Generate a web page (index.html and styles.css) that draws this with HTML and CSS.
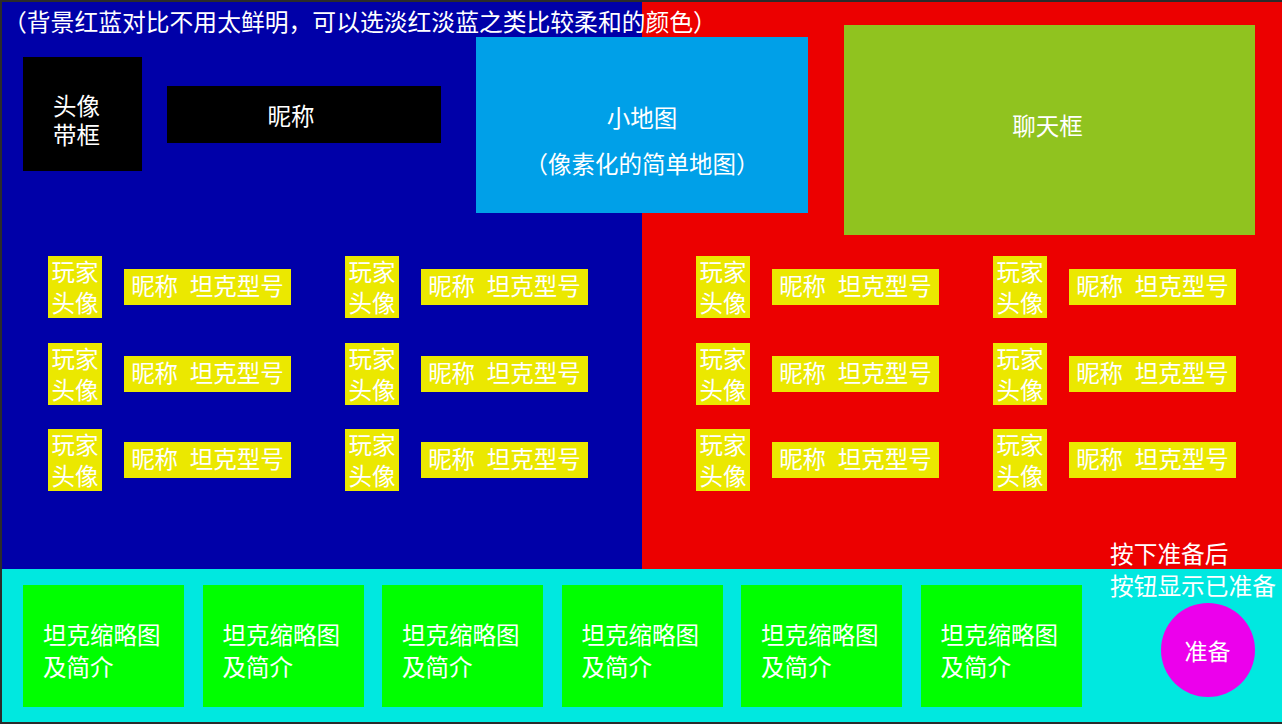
FILE: index.html
```html
<html>
    <head>
        <meta charset="utf-8">
        <link rel="stylesheet" href="styles.css">

        <title>房间</title>
    </head>

    <body>
        <div class="room">
            <div class="top">
                <div class="header">
                    <div class="header-left">
                        <h1 class="title">（背景红蓝对比不用太鲜明，可以选淡红淡蓝之类比较柔和的颜色）</h1>
                        <div class="header-row">
                            <div class="my-avatar">头像<br>带框</div>
                            <div class="my-name">昵称</div>
                            <div class="minimap">
                                <span>小地图</span>
                                <span>（像素化的简单地图）</span>
                            </div>
                        </div>
                    </div>
                    <div class="chat">聊天框</div>
                </div>

                <div class="teams">
                    <div class="team team-blue" id="teamBlue"></div>
                    <div class="team team-red" id="teamRed"></div>
                </div>

                <p class="ready-tip">按下准备后<br>按钮显示已准备</p>
            </div>

            <div class="bottom">
                <div class="tanks" id="tanks"></div>
                <button class="ready" id="ready" onclick="ready()">准备</button>
            </div>
        </div>

        <script>
            function fill(id)
            {
                let html = "";
                for(let i = 0; i < 6; i++)
                {
                    html += '<div class="player"><div class="player-avatar">玩家<br>头像</div><div class="player-name">昵称&ensp;坦克型号</div></div>';
                }
                document.getElementById(id).innerHTML = html;
            }

            function ready()
            {
                document.getElementById("ready").innerHTML = "已准备";
            }

            fill("teamBlue");
            fill("teamRed");

            let tanks = "";
            for(let i = 0; i < 6; i++)
            {
                tanks += '<div class="tank">坦克缩略图<br>及简介</div>';
            }
            document.getElementById("tanks").innerHTML = tanks;
        </script>
    </body>
</html>
```

FILE: styles.css
```css
body{
    margin: 0;
    padding: 2px 0px 0px 2px;
    background-color: #2b2b2b;
    font-family: "Noto Sans CJK SC", "Noto Sans", sans-serif;
    font-size: 23.5px;
    color: white;
}

.room{
    width: 1280px;
}

.top{
    position: relative;
    height: 567px;
    background: linear-gradient(to right, #0000a8 50%, #ec0000 50%);
}

.header{
    display: flex;
    align-items: flex-start;
}

.header-left{
    width: 806px;
}

.title{
    margin: 0;
    padding: 6px 0px 0px 1px;
    font-size: 23.8px;
    font-weight: normal;
    line-height: 26px;
    white-space: nowrap;
}

.header-row{
    display: flex;
    align-items: flex-start;
    padding-left: 21px;
}

.my-avatar{
    width: 119px;
    height: 114px;
    margin-top: 23px;
    padding: 12px 12px 0px 0px;
    box-sizing: border-box;
    background-color: black;
    line-height: 29px;
    display: flex;
    align-items: center;
    justify-content: center;
}

.my-name{
    width: 274px;
    height: 57px;
    margin: 52px 0px 0px 25px;
    padding-right: 26px;
    box-sizing: border-box;
    background-color: black;
    display: flex;
    align-items: center;
    justify-content: center;
}

.minimap{
    width: 332px;
    height: 176px;
    margin: 3px 0px 0px 35px;
    padding-top: 57px;
    box-sizing: border-box;
    background-color: #00a0e8;
    display: flex;
    flex-direction: column;
    align-items: center;
    line-height: 46px;
}

.chat{
    width: 411px;
    height: 210px;
    margin: 23px 0px 0px 36px;
    padding: 0px 4px 10px 0px;
    box-sizing: border-box;
    background-color: #90c31f;
    display: flex;
    align-items: center;
    justify-content: center;
}

.teams{
    display: grid;
    grid-template-columns: 1fr 1fr;
    padding-top: 21px;
}

.team{
    display: grid;
    grid-template-columns: 297px 297px;
    row-gap: 24.5px;
}

.team-blue{
    padding-left: 46px;
}

.team-red{
    padding-left: 54px;
}

.player{
    display: flex;
    align-items: center;
    gap: 22px;
}

.player-avatar{
    width: 54px;
    height: 62px;
    background-color: #ebe800;
    line-height: 31px;
    text-align: center;
    white-space: nowrap;
}

.player-name{
    width: 167px;
    height: 36px;
    padding-bottom: 3px;
    box-sizing: border-box;
    background-color: #ebe800;
    line-height: 33px;
    text-align: center;
    white-space: nowrap;
}

.ready-tip{
    position: absolute;
    left: 1108px;
    top: 535px;
    margin: 0;
    font-size: 23.7px;
    line-height: 32px;
    white-space: nowrap;
}

.bottom{
    display: flex;
    align-items: flex-start;
    height: 153px;
    padding: 16px 0px 0px 21px;
    box-sizing: border-box;
    background-color: #00e8e0;
}

.tanks{
    display: flex;
    gap: 18.5px;
}

.tank{
    width: 161px;
    height: 122px;
    padding: 8px 0px 0px 20px;
    box-sizing: border-box;
    background-color: #00ff00;
    line-height: 32px;
    display: flex;
    align-items: center;
}

.ready{
    width: 94px;
    height: 94px;
    margin: 18px 0px 0px 79px;
    padding: 0;
    border: none;
    border-radius: 50%;
    background-color: #ec00ec;
    color: white;
    font-family: inherit;
    font-size: 23px;
}
```
